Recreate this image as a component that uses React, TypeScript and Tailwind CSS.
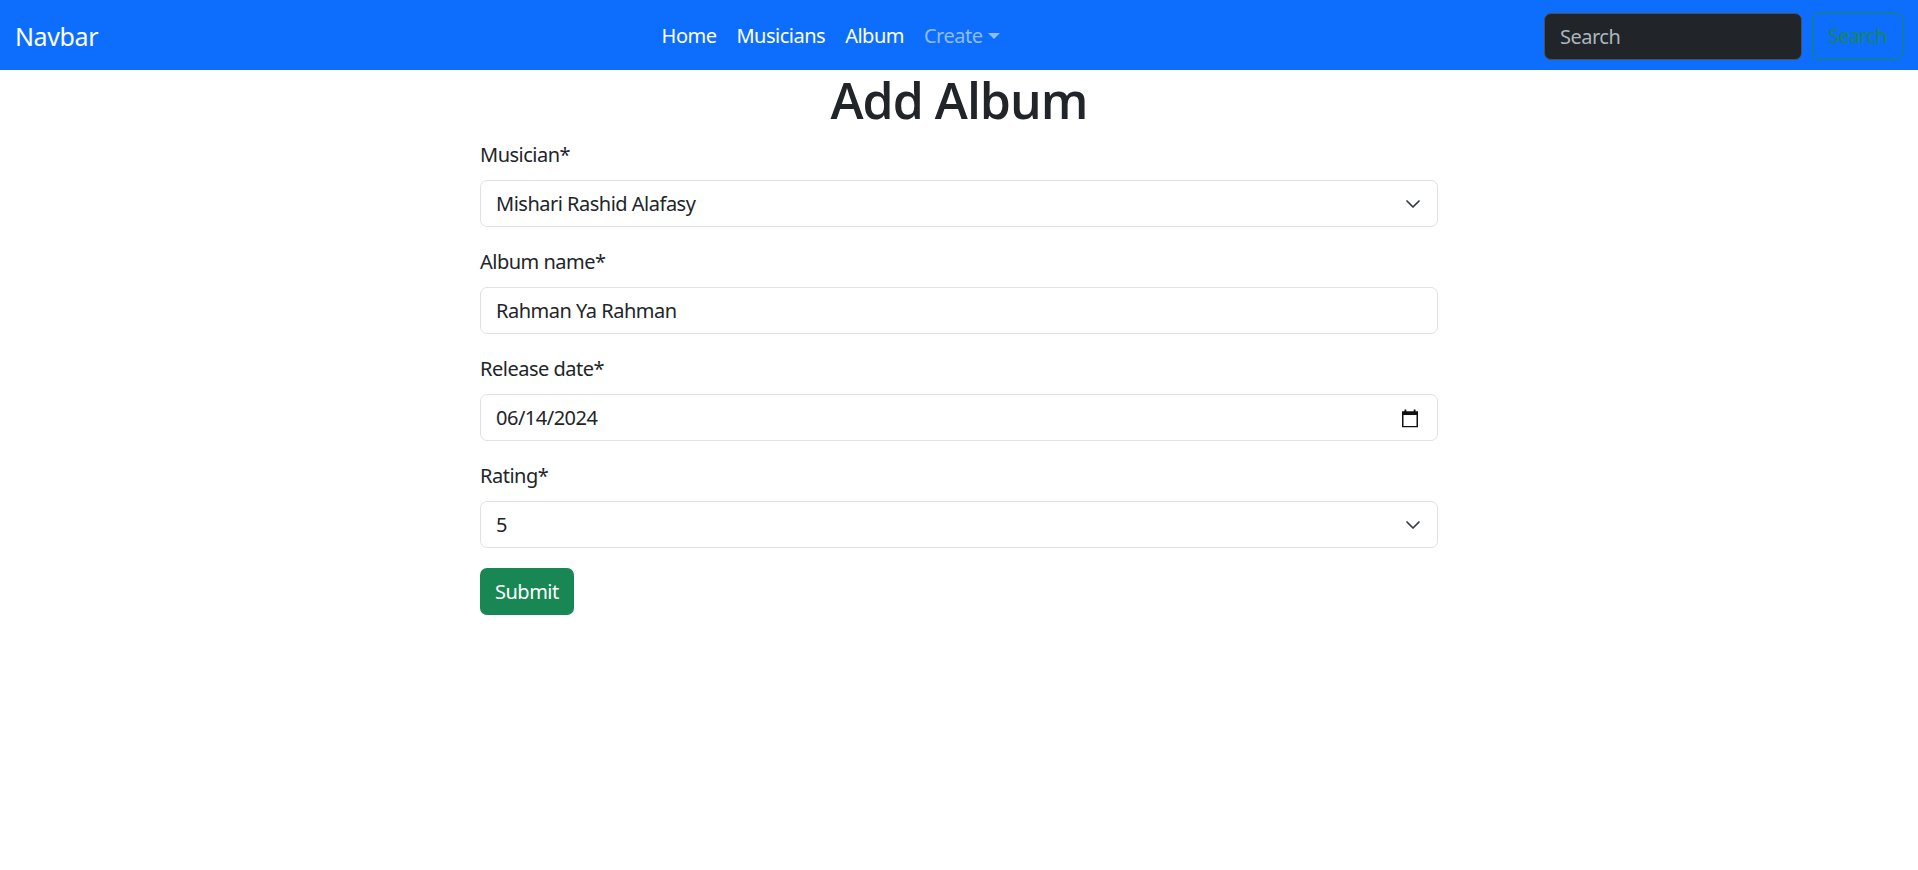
import React from "react";

function Chevron() {
  return (
    <svg
      className="pointer-events-none absolute right-[17px] top-1/2 -translate-y-1/2"
      width="16"
      height="16"
      viewBox="0 0 16 16"
      fill="none"
    >
      <path d="M2 5l6 6 6-6" stroke="#343a40" strokeWidth="1.7" strokeLinecap="round" strokeLinejoin="round" />
    </svg>
  );
}

function CalendarIcon() {
  return (
    <svg
      className="pointer-events-none absolute right-[20px] top-1/2 -translate-y-1/2"
      width="16"
      height="19"
      viewBox="0 0 16 19"
      fill="none"
    >
      <rect x="0.75" y="3.75" width="14.5" height="14.5" stroke="#111" strokeWidth="1.5" fill="none" />
      <rect x="0" y="3" width="16" height="3.5" fill="#111" />
      <rect x="2.5" y="1" width="1.8" height="3" fill="#111" />
      <rect x="11.7" y="1" width="1.8" height="3" fill="#111" />
    </svg>
  );
}

const fieldCls =
  "block w-full h-[47px] rounded-[7px] border border-[#dee2e6] bg-white px-[15px] text-[20px] tracking-[-0.5px] text-[#212529] outline-none appearance-none";

export default function App() {
  return (
    <div className="min-h-[870px] bg-white text-[#212529]" style={{ fontFamily: '"Noto Sans", "Open Sans", sans-serif' }}>
      <nav className="flex h-[70px] items-center bg-[#0d6efd] px-[15px] pt-[2px]">
        <a className="mr-[20px] text-[25px] leading-[36px] tracking-[-0.4px] text-white">Navbar</a>
        <ul className="mx-auto flex items-center text-[20px] leading-[30px] tracking-[-0.5px]">
          <li className="px-[10px] text-white">Home</li>
          <li className="px-[10px] text-white">Musicians</li>
          <li className="px-[10px] text-white">Album</li>
          <li className="flex items-center px-[10px] text-[rgba(255,255,255,0.55)]">
            Create
            <span className="ml-[6px] inline-block h-0 w-0 border-x-[6px] border-t-[6px] border-x-transparent border-t-[rgba(255,255,255,0.55)]" />
          </li>
        </ul>
        <form className="flex items-center">
          <input
            className="h-[47px] w-[258px] rounded-[7px] border border-[#495057] bg-[#212529] px-[15px] text-[20px] tracking-[-0.5px] text-white placeholder:text-[#adb5bd] outline-none"
            placeholder="Search"
          />
          <button
            type="button"
            className="ml-[10px] flex h-[47px] w-[91px] items-center justify-center whitespace-nowrap rounded-[7px] border border-[#198754] px-0 text-[20px] tracking-[-0.8px] text-[#198754]"
          >
            Search
          </button>
        </form>
      </nav>
      <div className="mx-auto w-[958px]">
        <h1
          className="mb-[10px] h-[60px] text-center text-[50px] font-semibold leading-[60px] tracking-[-1px]"
          style={{ fontFamily: '"Open Sans", "Noto Sans", sans-serif' }}
        >
          Add Album
        </h1>
        <div className="mb-[20px]">
          <label className="mb-[10px] block text-[20px] leading-[30px] tracking-[-0.5px]">Musician*</label>
          <div className="relative">
            <select className={fieldCls} defaultValue="m">
              <option value="m">Mishari Rashid Alafasy</option>
            </select>
            <Chevron />
          </div>
        </div>
        <div className="mb-[20px]">
          <label className="mb-[10px] block text-[20px] leading-[30px] tracking-[-0.5px]">Album name*</label>
          <input className={fieldCls} defaultValue="Rahman Ya Rahman" />
        </div>
        <div className="mb-[20px]">
          <label className="mb-[10px] block text-[20px] leading-[30px] tracking-[-0.5px]">Release date*</label>
          <div className="relative">
            <input className={fieldCls} defaultValue="06/14/2024" />
            <CalendarIcon />
          </div>
        </div>
        <div className="mb-[20px]">
          <label className="mb-[10px] block text-[20px] leading-[30px] tracking-[-0.5px]">Rating*</label>
          <div className="relative">
            <select className={fieldCls} defaultValue="5">
              <option value="5">5</option>
            </select>
            <Chevron />
          </div>
        </div>
        <button
          type="button"
          className="h-[47px] rounded-[7px] bg-[#198754] px-[15px] text-[20px] tracking-[-0.5px] text-white"
        >
          Submit
        </button>
      </div>
    </div>
  );
}
